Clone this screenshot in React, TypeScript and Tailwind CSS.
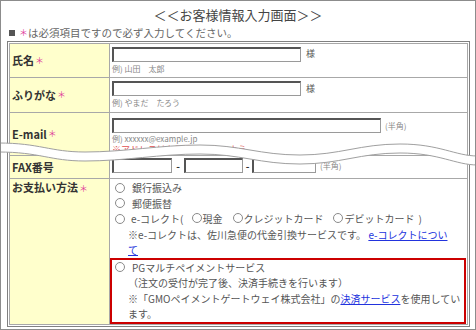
import React from "react";

const Req = () => <span className="ml-[1px] text-[9px] font-normal text-[#e0409a]">＊</span>;

const Box = ({ w }: { w: string }) => (
  <span className={`block h-[15px] shrink-0 border border-[#9a9a9a] border-t-2 border-l-2 border-t-[#555] border-l-[#555] bg-white ${w}`} />
);

const Radio = () => (
  <span className="inline-block h-[10px] w-[10px] shrink-0 rounded-full border border-[#8a8a8a] bg-white" />
);

const wave =
  "M-2,143 C40,143 50,152 85,152 C125,152 160,145 200,145 C240,145 260,155 300,155 C340,155 360,144 400,144 C440,144 455,156 478,156";
const waveLow =
  "M-2,152 C40,152 50,161 85,161 C125,161 160,154 200,154 C240,154 260,164 300,164 C340,164 360,153 400,153 C440,153 455,165 478,165";
const waveFill =
  wave +
  " L478,165 C455,165 440,153 400,153 C360,153 340,164 300,164 C260,164 240,154 200,154 C160,154 125,161 85,161 C50,161 40,152 -2,152 Z";

export default function App() {
  return (
    <div className="relative h-[330px] w-[476px] overflow-hidden border border-[#8c8c8c] bg-white font-['Noto_Sans_CJK_JP','Noto_Sans',sans-serif] text-[#555]">
      <div className="pt-[5px] text-center text-[13px] leading-[18px] text-[#444]">＜＜お客様情報入力画面＞＞</div>
      <div className="mt-[2px] flex items-center pl-[8px] text-[10.5px] leading-[14px] text-[#666]">
        <span className="mr-[4px] h-[6px] w-[6px] bg-[#555]" />
        <span className="text-[9px] text-[#e0409a]">＊</span>
        は必須項目ですので必ず入力してください。
      </div>

      <div className="ml-[6px] mt-[1px] w-[463px] border border-[#808080] p-px">
        <div className="grid grid-cols-[99px_357px] gap-px border border-[#a8a8a8] bg-[#a8a8a8]">
          {/* 氏名 */}
          <div className="flex h-[33px] items-center bg-[#ffffcc] pl-[2px] text-[11px] font-bold text-[#333]">
            氏名<Req />
          </div>
          <div className="flex h-[33px] flex-col justify-center bg-white pl-[2px]">
            <div className="flex items-center">
              <Box w="w-[189px]" />
              <span className="ml-[5px] text-[9px] text-[#555]">様</span>
            </div>
            <div className="mt-[1px] text-[8px] leading-[12px] text-[#888]">例) 山田　太郎</div>
          </div>

          {/* ふりがな */}
          <div className="flex h-[34px] items-center bg-[#ffffcc] pl-[2px] text-[11px] font-bold text-[#333]">
            ふりがな<Req />
          </div>
          <div className="flex h-[34px] flex-col justify-center bg-white pl-[2px]">
            <div className="flex items-center">
              <Box w="w-[189px]" />
              <span className="ml-[5px] text-[9px] text-[#555]">様</span>
            </div>
            <div className="mt-[1px] text-[8px] leading-[12px] text-[#888]">例) やまだ　たろう</div>
          </div>

          {/* E-mail */}
          <div className="flex h-[42px] items-center bg-[#ffffcc] pl-[2px] text-[11px] font-bold text-[#333]">
            E-mail<Req />
          </div>
          <div className="h-[42px] bg-white pl-[2px] pt-[5px]">
            <div className="flex items-center">
              <Box w="w-[269px]" />
              <span className="ml-[4px] text-[8px] text-[#888]">(半角)</span>
            </div>
            <div className="text-[8px] leading-[11px] text-[#888]">例) xxxxxx@example.jp</div>
            <div className="whitespace-nowrap text-[9px] leading-[11px] text-[#e05050]">※アドレスはお間違いのないよう</div>
          </div>

          {/* FAX */}
          <div className="flex h-[22px] items-center bg-[#ffffcc] pl-[2px] text-[11px] font-bold text-[#333]">
            FAX番号
          </div>
          <div className="flex h-[22px] items-start bg-white pl-[2px] pt-[2px]">
            <Box w="w-[60px]" />
            <span className="w-[12px] text-center text-[10px] font-bold leading-[15px] text-[#333]">-</span>
            <Box w="w-[59px]" />
            <span className="w-[9px] text-center text-[10px] font-bold leading-[15px] text-[#333]">-</span>
            <Box w="w-[64px]" />
            <span className="ml-[4px] text-[8px] leading-[15px] text-[#888]">(半角)</span>
          </div>

          {/* お支払い方法 */}
          <div className="bg-[#ffffcc] pl-[2px] pt-[1px] text-[11px] font-bold leading-[15.5px] text-[#333]">
            お支払い方法<Req />
          </div>
          <div className="bg-white pt-[1px] text-[10px] leading-[15.5px] text-[#555]">
            <div className="flex items-center pl-[5px]">
              <Radio />
              <span className="ml-[7px]">銀行振込み</span>
            </div>
            <div className="flex items-center pl-[5px]">
              <Radio />
              <span className="ml-[7px]">郵便振替</span>
            </div>
            <div className="flex items-center whitespace-nowrap pl-[5px]">
              <Radio />
              <span className="ml-[6px]">e-コレクト(</span>
              <span className="ml-[8px]"><Radio /></span>
              <span className="ml-[1px]">現金</span>
              <span className="ml-[10px]"><Radio /></span>
              <span className="ml-[1px]">クレジットカード</span>
              <span className="ml-[9px]"><Radio /></span>
              <span className="ml-[2px]">デビットカード</span>
              <span className="ml-[4px]">)</span>
            </div>
            <div className="whitespace-nowrap pl-[18px]">
              　※e-コレクトは、佐川急便の代金引換サービスです。 <span className="text-[#2233dd] underline">e-コレクトについ</span>
            </div>
            <div className="pl-[18px]">
              <span className="text-[#2233dd] underline">て</span>
            </div>
            <div className="mr-px border-2 border-[#cc0000]">
              <div className="flex items-center pl-[3px]">
                <Radio />
                <span className="ml-[7px]">PGマルチペイメントサービス</span>
              </div>
              <div className="whitespace-nowrap pl-[16px]">（注文の受付が完了後、決済手続きを行います）</div>
              <div className="whitespace-nowrap pl-[16px]">
                ※「GMOペイメントゲートウェイ株式会社」の<span className="text-[#2233dd] underline">決済サービス</span>を使用してい
              </div>
              <div className="pl-[16px]">ます。</div>
            </div>
          </div>
        </div>
      </div>

      <svg className="pointer-events-none absolute -left-px -top-px" width={476} height={330}>
        <path d={waveFill} fill="#ffffff" />
        <path d={wave} fill="none" stroke="#a0a0a0" strokeWidth={1} />
        <path d={waveLow} fill="none" stroke="#a0a0a0" strokeWidth={1} />
        <line x1={475.5} y1={156} x2={475.5} y2={165} stroke="#a0a0a0" strokeWidth={1} />
      </svg>
    </div>
  );
}
